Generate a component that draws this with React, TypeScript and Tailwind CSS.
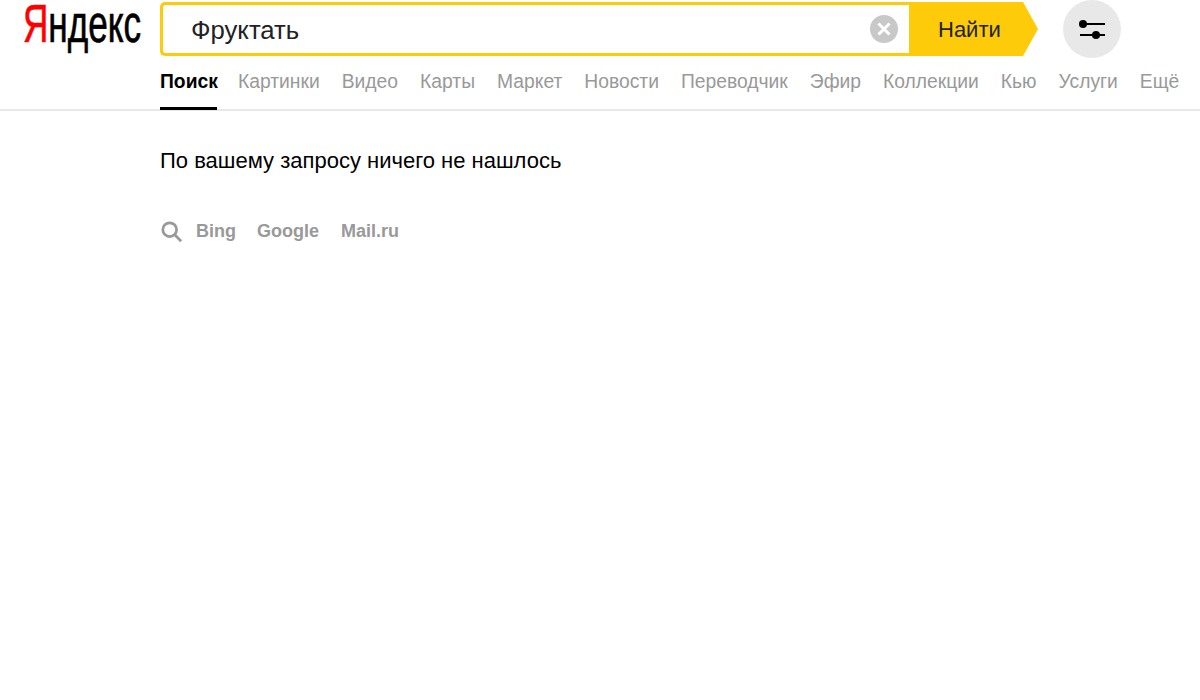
const tabs = ["Картинки", "Видео", "Карты", "Маркет", "Новости", "Переводчик", "Эфир", "Коллекции", "Кью", "Услуги", "Ещё"];

const App = () => {
  return (
    <div className="min-h-[700px] bg-white font-['Liberation_Sans',Arial,sans-serif] overflow-hidden">
      <header className="h-[111px] border-b-2 border-[#e8e8e8] flex">
        <div className="w-[160px] shrink-0 pl-[23px]">
          <div className="origin-top-left scale-x-[0.65] text-[54px] leading-[47px] whitespace-nowrap text-black [-webkit-text-stroke:0.7px_black]">
            <span className="text-[#f00] [-webkit-text-stroke:0.7px_#f00]">Я</span>ндекс
          </div>
        </div>
        <div className="flex-1 min-w-0 flex flex-col">
          <div className="flex items-start">
            <div className="mt-[2px] w-[878px] h-[54px] flex">
              <div className="w-[749px] border-[3px] border-r-0 border-[#fecb0b] rounded-l-[5px] flex items-center pl-[28px] pr-[11px] justify-between">
                <span className="text-[25.7px] text-[#222] mt-[3px]">Фруктать</span>
                <svg width="28" height="28" viewBox="0 0 28 28">
                  <circle cx="14" cy="14" r="14" fill="#c8c8c8" />
                  <path d="M8.5 8.5l11 11M19.5 8.5l-11 11" stroke="#fff" strokeWidth="3" />
                </svg>
              </div>
              <div className="flex-1 bg-[#fecb0b] [clip-path:polygon(0_0,88.4%_0,100%_50%,88.4%_100%,0_100%)] flex items-center pl-[29px] text-[22px] text-[#222]">
                Найти
              </div>
            </div>
            <div className="ml-[25px] w-[58px] h-[58px] rounded-full bg-[#e8e8e8] flex items-center justify-center">
              <svg width="28" height="24" viewBox="0 0 28 24">
                <path d="M2 7h25M2 18h25" stroke="#000" strokeWidth="2" />
                <circle cx="5" cy="7" r="4" fill="#000" />
                <circle cx="18" cy="18" r="4" fill="#000" />
              </svg>
            </div>
          </div>
          <nav className="mt-[10px] flex gap-[22px] text-[19.3px] leading-[28px] whitespace-nowrap text-[#999]">
            <div className="w-[57px] -mr-px h-[42px] border-b-[3px] border-black font-bold text-black">Поиск</div>
            {tabs.map((t) => (
              <div key={t}>{t}</div>
            ))}
          </nav>
        </div>
      </header>
      <main className="pl-[160px] pt-[36px]">
        <p className="text-[22px] leading-[28px] text-black">По вашему запросу ничего не нашлось</p>
        <div className="mt-[43px] flex items-center text-[18px] font-bold text-[#999]">
          <svg width="22" height="22" viewBox="0 0 24 24" fill="none" stroke="#999" strokeWidth="3" className="ml-px mr-[13px]">
            <circle cx="9.5" cy="9.5" r="7.5" />
            <path d="M15 15l7 7" />
          </svg>
          <span className="mr-[21px]">Bing</span>
          <span className="mr-[22px]">Google</span>
          <span>Mail.ru</span>
        </div>
      </main>
    </div>
  );
};

export default App;
